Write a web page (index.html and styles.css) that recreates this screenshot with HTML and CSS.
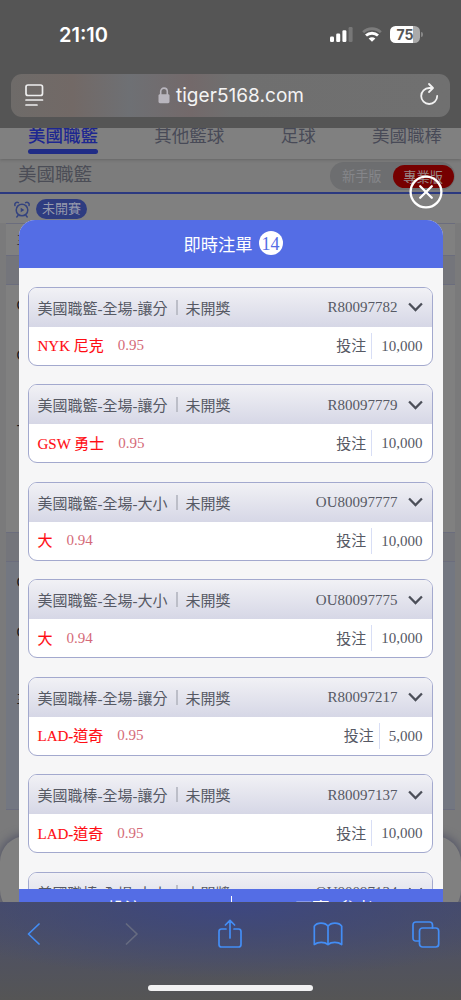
FILE: index.html
```html
<!DOCTYPE html>
<html lang="zh-Hant">
<head>
<meta charset="utf-8">
<meta name="viewport" content="width=device-width, initial-scale=1">
<title>即時注單</title>
<link rel="stylesheet" href="styles.css">
</head>
<body>
<div class="phone">
  <header class="browser-top">
    <div class="status">
      <span class="time">21:10</span>
      <div class="status-icons">
        <svg width="23" height="15" viewBox="0 0 23 15"><rect x="0" y="9.500" width="4" height="5.500" rx="1.2" fill="#fff"/><rect x="6.2" y="6.500" width="4" height="8.500" rx="1.2" fill="#fff"/><rect x="12.4" y="3.200" width="4" height="11.800" rx="1.2" fill="#fff"/><rect x="18.6" y="0" width="4" height="15" rx="1.2" fill="#777"/></svg>
        <svg class="wifi" width="20" height="15" viewBox="0 0 20 15"><path d="M1.2 5.2C6 .6 14 .6 18.8 5.2" fill="none" stroke="#7c7c7c" stroke-width="2.800"/><path d="M4 8.5C7.4 5.4 12.6 5.4 16 8.5" fill="none" stroke="#fff" stroke-width="2.900"/><path d="M6.6 11.5C8.6 9.800 11.4 9.800 13.4 11.5L10 14.8Z" fill="#fff"/></svg>
        <div class="battery"><span>75</span></div>
      </div>
    </div>
    <div class="address">
      <svg width="19" height="23" viewBox="0 0 19 23" fill="none" stroke="#eee" stroke-width="1.7" stroke-linecap="round"><rect x="1" y="1" width="16.5" height="10.5" rx="2"/><path d="M1 16H17.5M1 21H12"/></svg>
      <div class="url">
        <svg width="12" height="17" viewBox="0 0 12 17"><path d="M2.7 8V4.6C2.7 0 9.3 0 9.3 4.6V8" fill="none" stroke="#b9b6be" stroke-width="1.6"/><rect x=".5" y="7.2" width="11" height="9" rx="1.4" fill="#b9b6be"/></svg>
        <span>tiger5168.com</span>
      </div>
      <svg width="19" height="24" viewBox="0 0 19 24" fill="none" stroke="#f2f2f2" stroke-width="1.8" stroke-linecap="round" stroke-linejoin="round"><path d="M12.800 6H9.200A8 8 0 1 0 17.200 14M9 2 13 6 9 10"/></svg>
    </div>
  </header>

  <main class="page">
    <nav class="tabs"><span class="active">美國職籃</span><span>其他籃球</span><span>足球</span><span>美國職棒</span></nav>
    <div class="league"><span>美國職籃</span><div class="switch"><span>新手版</span><b>專業版</b></div></div>
    <div class="state">
      <svg width="16" height="17" viewBox="0 0 16 17" fill="none" stroke="#34437f" stroke-width="1.5" stroke-linecap="round"><circle cx="8" cy="9" r="5.8"/><path d="M1 4.5C.2 2.2 2.4 .6 4.4 1.6M15 4.5C15.8 2.2 13.6 .6 11.6 1.6M4 14.5 2.8 16M12 14.5 13.2 16"/><path d="M6.7 6.7V11.3L10.4 9Z" fill="#34437f" stroke="none"/></svg>
      <span>未開賽</span>
    </div>
    <section class="games">
      <div class="game short"><i>主</i></div>
      <div class="game"><i>G</i><i>O</i><i>-</i></div>
      <div class="game tinted"><i>G</i><i>O</i><i>主</i></div>
    </section>
    <div class="sheet"></div>

    <section class="modal">
      <h1>即時注單<span>14</span></h1>
      <div class="tickets">
        <article class="ticket"><header><span>美國職籃-全場-讓分</span><s></s><span>未開獎</span><em>R80097782</em><svg class="chev" viewBox="0 0 14 9"><path d="M1 1.2 7 7.4 13 1.2"/></svg></header><div class="bet"><strong>NYK 尼克</strong><span class="odds">0.95</span><span class="label">投注</span><span class="amount">10,000</span></div></article>
        <article class="ticket"><header><span>美國職籃-全場-讓分</span><s></s><span>未開獎</span><em>R80097779</em><svg class="chev" viewBox="0 0 14 9"><path d="M1 1.2 7 7.4 13 1.2"/></svg></header><div class="bet"><strong>GSW 勇士</strong><span class="odds">0.95</span><span class="label">投注</span><span class="amount">10,000</span></div></article>
        <article class="ticket"><header><span>美國職籃-全場-大小</span><s></s><span>未開獎</span><em>OU80097777</em><svg class="chev" viewBox="0 0 14 9"><path d="M1 1.2 7 7.4 13 1.2"/></svg></header><div class="bet"><strong>大</strong><span class="odds">0.94</span><span class="label">投注</span><span class="amount">10,000</span></div></article>
        <article class="ticket"><header><span>美國職籃-全場-大小</span><s></s><span>未開獎</span><em>OU80097775</em><svg class="chev" viewBox="0 0 14 9"><path d="M1 1.2 7 7.4 13 1.2"/></svg></header><div class="bet"><strong>大</strong><span class="odds">0.94</span><span class="label">投注</span><span class="amount">10,000</span></div></article>
        <article class="ticket"><header><span>美國職棒-全場-讓分</span><s></s><span>未開獎</span><em>R80097217</em><svg class="chev" viewBox="0 0 14 9"><path d="M1 1.2 7 7.4 13 1.2"/></svg></header><div class="bet"><strong>LAD-道奇</strong><span class="odds">0.95</span><span class="label">投注</span><span class="amount">5,000</span></div></article>
        <article class="ticket"><header><span>美國職棒-全場-讓分</span><s></s><span>未開獎</span><em>R80097137</em><svg class="chev" viewBox="0 0 14 9"><path d="M1 1.2 7 7.4 13 1.2"/></svg></header><div class="bet"><strong>LAD-道奇</strong><span class="odds">0.95</span><span class="label">投注</span><span class="amount">10,000</span></div></article>
        <article class="ticket"><header><span>美國職棒-全場-大小</span><s></s><span>未開獎</span><em>OU80097134</em><svg class="chev" viewBox="0 0 14 9"><path d="M1 1.2 7 7.4 13 1.2"/></svg></header></article>
      </div>
      <footer class="totals"><span>投注</span><span>可贏 (參考)</span></footer>
    </section>
    <svg class="close" width="34" height="34" viewBox="0 0 34 34" fill="none" stroke="#fff" stroke-width="2.3" stroke-linecap="round"><circle cx="17" cy="17" r="15.4"/><path d="M11.2 11.2 22.8 22.8M22.8 11.2 11.2 22.8"/></svg>
  </main>

  <footer class="browser-bottom">
    <div class="tools">
      <svg width="14" height="22" viewBox="0 0 14 22"><path d="M12 1 1.5 11 12 21"/></svg>
      <svg class="off" width="14" height="22" viewBox="0 0 14 22"><path d="M1.5 1 12 11 1.5 21"/></svg>
      <svg width="24" height="30" viewBox="0 0 24 30"><path d="M8 10H3.5Q1 10 1 12.5V25.5Q1 28 3.5 28H20.5Q23 28 23 25.5V12.5Q23 10 20.5 10H16M12 19V1.5M7.4 6 12 1.3 16.600 6"/></svg>
      <svg width="30" height="24" viewBox="0 0 30 24"><path d="M15 4.2C12 .2 4 .2 1.3 4.2V22.5C5 19.6 11.5 19.6 15 22.5 18.500 19.600 25 19.600 28.700 22.500V4.200C26 .2 18 .2 15 4.200V22.500"/></svg>
      <svg width="28" height="27" viewBox="0 0 28 27"><rect x="7.500" y="7" width="19.200" height="19" rx="3"/><path d="M7.500 20H4Q1 20 1 17V4Q1 1 4 1H17.500Q20.500 1 20.500 4V7"/></svg>
    </div>
    <div class="home"></div>
  </footer>
</div>
</body>
</html>
```

FILE: styles.css
```css
* { box-sizing: border-box; }
body { margin: 0; background: #555; }
svg { display: block; flex: none; }

.phone {
  width: 461px;
  height: 1000px;
  display: flex;
  flex-direction: column;
  overflow: hidden;
  font-family: "Liberation Serif", "Noto Sans CJK TC", serif;
}

/* browser chrome, top */
.browser-top {
  height: 128px;
  flex: none;
  padding: 21px 11px 0;
  background: #555;
  font-family: Inter, sans-serif;
  color: #fff;
}
.status {
  height: 28px;
  display: flex;
  justify-content: space-between;
  align-items: center;
  padding: 0 30px 0 48px;
}
.time { font-size: 20px; font-weight: 600; letter-spacing: 0; }
.status-icons { display: flex; align-items: center; gap: 8.500px; padding-bottom: 1px; }
.battery {
  width: 30px;
  height: 17px;
  border-radius: 5.500px;
  background: linear-gradient(90deg, #fff 76%, #aaa 76%);
  color: #555;
  font-size: 14px;
  font-weight: 700;
  line-height: 17px;
  text-align: center;
  position: relative;
}
.battery::after {
  content: "";
  position: absolute;
  left: 31px;
  top: 6px;
  width: 2px;
  height: 5px;
  border-radius: 0 2px 2px 0;
  background: #888;
}
.address {
  height: 43px;
  margin-top: 25px;
  padding: 0 11px 0 14px;
  border-radius: 11px;
  background: linear-gradient(90deg, #6e6b69, #726966 14%, #6e7074 27%, #73696a 41%, #6f6f6f 50%, #707070);
  display: flex;
  align-items: center;
  justify-content: space-between;
}
.address > svg:last-child { margin-bottom: 4px; }
.url { display: flex; align-items: center; gap: 6px; margin-left: -2px; font-size: 19px; letter-spacing: .05px; color: #f4f4f4; }

/* dimmed betting page */
.page {
  height: 774px;
  flex: none;
  position: relative;
  overflow: hidden;
  background: #7a7a7b;
}
.tabs {
  height: 31px;
  padding: 0 19px 0 28px;
  display: flex;
  justify-content: space-between;
  background: #808080;
  color: #484a57;
  font-size: 17.500px;
  line-height: 16px;
  box-shadow: 0 1px 3px #666;
  position: relative;
}
.tabs .active { color: #1d2790; font-weight: 500; }
.tabs .active::after { content: ""; display: block; height: 5px; margin-top: 5px; border-radius: 2.500px; background: #202c86; }
.league {
  height: 34.500px;
  padding: 3px 6px 0 18px;
  display: flex;
  justify-content: space-between;
  background: #7c7c7c;
  border-bottom: 2px solid #2b3980;
  color: #4b4d56;
  font-size: 18.500px;
  line-height: 26px;
}
.switch {
  width: 125px;
  height: 28px;
  border-radius: 14px;
  background: #6d6e70;
  display: flex;
  align-items: center;
  padding-left: 12px;
  color: #85868a;
  font-size: 13.200px;
  line-height: 29px;
  gap: 11px;
}
.switch b { width: 61px; height: 23px; border-radius: 12px; line-height: 26px; text-align: center; background: #760000; color: #988; font-weight: 400; }
.state { height: 29px; background: #808080; display: flex; gap: 6px; align-items: center; padding: 2px 14px 0; }
.state span { width: 51px; height: 20px; border-radius: 10px; background: #2e3c80; color: #969aad; font-size: 13px; line-height: 20px; text-align: center; }
.games { margin: 0 6px; background: #74757b; display: grid; grid-template-rows: 33px 249px 249px; gap: 28px; }
.game { background: #808080; border: solid #6b6d7d; border-width: 1px 0; padding: 14px 10.500px; display: flex; flex-direction: column; gap: 38px; }
.game i { font: normal 14px/12px "Liberation Sans", "Noto Sans CJK TC", sans-serif; color: #15161c; height: 12px; }
.game i:nth-child(3) { margin-top: 20px; }
.game.short { padding-top: 9px; }
.game.short i { color: #343640; }
.game.tinted { background: #737781; }
.game.tinted i:nth-child(3) { margin-top: 16px; }
.sheet { height: 80px; margin-top: 26px; border-radius: 26px; background: #808080; box-shadow: 0 0 8px 2px #555768; }

/* ticket list modal */
.modal {
  position: absolute;
  left: 18.500px;
  top: 92px;
  width: 424px;
  height: 682px;
  border-radius: 16px 16px 0 0;
  overflow: hidden;
  background: #f6f6f7;
  display: flex;
  flex-direction: column;
}
.modal h1 {
  height: 48px;
  flex: none;
  margin: 0;
  padding: 0 0 2px 5px;
  background: #546de5;
  color: #fff;
  font-size: 17.300px;
  font-weight: 400;
  display: flex;
  align-items: center;
  justify-content: center;
  gap: 6px;
}
.modal h1 span { width: 24px; height: 24px; border-radius: 50%; background: #fff; color: #546de5; line-height: 26px; text-align: center; font-size: 18px; }
.tickets { height: 621px; flex: none; padding: 18.800px 10px 0 9px; overflow: hidden; display: flex; flex-direction: column; gap: 18.500px; }
.ticket {
  height: 79px;
  flex: none;
  border: 1px solid #a3a9ce;
  border-radius: 9px;
  overflow: hidden;
  background: #fff;
  color: #565964;
  font-size: 15px;
}
.ticket header { height: 39px; padding: 0 9px; display: flex; align-items: center; background: linear-gradient(#f1f1f5, #d6d7e6); }
.ticket s { width: 2px; height: 15px; margin: 0 8px; background: #bcbec8; }
.ticket em { margin-left: auto; font-style: normal; padding-top: 1px; }
.chev { width: 15px; height: 10px; margin-left: 10px; fill: none; stroke: #4c4f59; stroke-width: 2.100; }
.bet { height: 38px; padding: 0 9px; display: flex; align-items: center; }
.bet strong { color: #ff0d14; font-weight: 400; -webkit-text-stroke: .12px #ff0d14; }
.odds { color: #d46a78; margin-left: 14px; }
.label { margin-left: auto; }
.amount { height: 26px; line-height: 26px; margin-left: 5px; padding-left: 9px; border-left: 1px solid #d8def5; }
.bet strong, .label { margin-top: -2px; }
.totals { flex: 1; display: grid; grid-template-columns: 1fr 1fr; background: #546de5; color: #fff; font-size: 17px; line-height: 42px; text-align: center; }
.totals span + span { border-left: 1px solid #fff; margin-top: 7px; line-height: 28px; }
.close { position: absolute; left: 409px; top: 47px; }

/* browser chrome, bottom */
.browser-bottom {
  height: 98px;
  flex: none;
  border-top: 1px solid #464c6d;
  background: radial-gradient(ellipse 330px 75px at 50% 0, #3d4781, #3f4879cc 35%, transparent), linear-gradient(#494d66, #505260 55%, #555);
  display: flex;
  flex-direction: column;
  align-items: center;
}
.tools { width: 490px; height: 62px; flex: none; display: grid; grid-template-columns: repeat(5, 98px); place-items: center; margin-left: -2px; }
.tools svg { fill: none; stroke: #438df5; stroke-width: 1.700; stroke-linecap: round; stroke-linejoin: round; }
.tools .off { stroke: #666b80; }
.home { width: 165px; height: 6px; border-radius: 3px; background: #f1f1f2; margin-top: 20px; }
```
